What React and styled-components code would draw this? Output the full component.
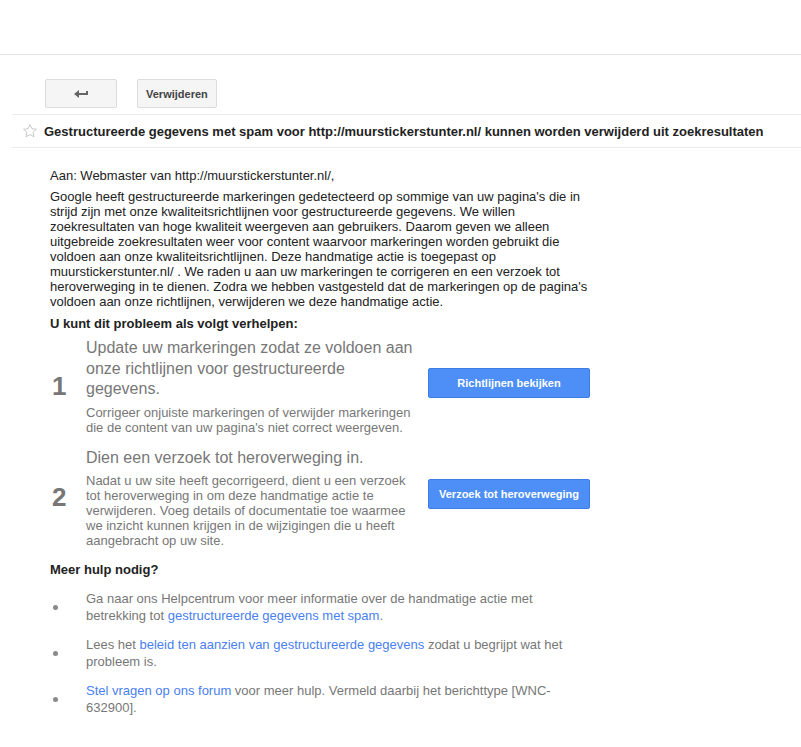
import React from "react";
import styled, { createGlobalStyle } from "styled-components";

const Global = createGlobalStyle`
  html, body { margin: 0; padding: 0; background: #fff; }
  body { font-family: Arial, "Liberation Sans", sans-serif; color: #222; }
`;

const Page = styled.div`
  width: 801px;
  min-height: 747px;
  overflow: hidden;
`;

const TopBar = styled.div`
  height: 54px;
  border-bottom: 1px solid #e5e5e5;
`;

const Toolbar = styled.div`
  display: flex;
  gap: 20px;
  margin-left: 12px;
  padding: 24px 0 6px 33px;
  border-bottom: 1px solid #ebebeb;
`;

const ToolButton = styled.button`
  box-sizing: border-box;
  height: 29px;
  min-width: ${(p) => (p.$wide ? "72px" : "auto")};
  padding: 0 8px;
  display: flex;
  align-items: center;
  justify-content: center;
  background: #f5f5f5;
  border: 1px solid #dcdcdc;
  border-radius: 2px;
  font: bold 11px Arial, "Liberation Sans", sans-serif;
  color: #444;
`;

const TitleRow = styled.div`
  display: flex;
  align-items: center;
  gap: 6px;
  margin-left: 12px;
  height: 32px;
  padding-left: 10px;
  border-bottom: 1px solid #ebebeb;
`;

const Title = styled.h1`
  margin: 0;
  font: bold 13px Arial, "Liberation Sans", sans-serif;
  color: #222;
  white-space: nowrap;
`;

const Content = styled.div`
  width: 540px;
  padding: 20px 0 0 50px;
  font-size: 13px;
  line-height: 15px;
`;

const Para = styled.p`
  margin: 0 0 ${(p) => p.$mb || 6}px;
`;

const Heading = styled.h2`
  margin: ${(p) => p.$mt || 0}px 0 0;
  font: bold 13px Arial, "Liberation Sans", sans-serif;
  line-height: 16px;
  color: #222;
`;

const Step = styled.div`
  display: grid;
  grid-template-columns: 36px 332px 1fr;
  align-items: center;
  margin-top: ${(p) => p.$mt}px;
`;

const StepNum = styled.div`
  font: bold 26px Arial, "Liberation Sans", sans-serif;
  color: #777;
  padding-left: 2px;
`;

const StepBody = styled.div`
  color: #777;
`;

const StepTitle = styled.div`
  font-size: 16px;
  line-height: 20.5px;
  margin-bottom: 5px;
`;

const StepText = styled.div`
  font-size: 13px;
  line-height: 15px;
`;

const BlueButton = styled.button`
  box-sizing: border-box;
  justify-self: end;
  width: 162px;
  height: 30px;
  background: #4d8ff6;
  border: 1px solid #3b7de6;
  border-radius: 2px;
  color: #fff;
  font: bold 11px Arial, "Liberation Sans", sans-serif;
  margin-top: ${(p) => p.$mt || 0}px;
`;

const HelpList = styled.ul`
  list-style: none;
  margin: 12px 0 0;
  padding: 0;
  display: flex;
  flex-direction: column;
  gap: 12px;
`;

const HelpItem = styled.li`
  display: grid;
  grid-template-columns: 36px 1fr;
  align-items: center;
  color: #777;
  line-height: 17px;
`;

const Bullet = styled.span`
  width: 5px;
  height: 5px;
  border-radius: 50%;
  background: #8a8a8a;
  margin-left: 3px;
`;

const Link = styled.a`
  color: #4a7ff0;
  text-decoration: none;
`;

const BackIcon = () => (
  <svg width="15" height="9" viewBox="0 0 15 9">
    <path d="M0 5 L5 1 L5 4 L12 4 L12 2 L14 2 L14 6 L5 6 L5 9 Z" fill="#666" />
  </svg>
);

const StarIcon = () => (
  <svg width="16" height="16" viewBox="0 0 24 24">
    <path
      d="M12 2.5 L14.9 8.6 L21.6 9.4 L16.6 14 L18 20.7 L12 17.3 L6 20.7 L7.4 14 L2.4 9.4 L9.1 8.6 Z"
      fill="none"
      stroke="#c4c4c4"
      strokeWidth="1.4"
      strokeLinejoin="round"
    />
  </svg>
);

export default function App() {
  return (
    <Page>
      <Global />
      <TopBar />
      <Toolbar>
        <ToolButton $wide>
          <BackIcon />
        </ToolButton>
        <ToolButton>Verwijderen</ToolButton>
      </Toolbar>
      <TitleRow>
        <StarIcon />
        <Title>
          Gestructureerde gegevens met spam voor http://muurstickerstunter.nl/ kunnen worden verwijderd uit zoekresultaten
        </Title>
      </TitleRow>
      <Content>
        <Para>Aan: Webmaster van http://muurstickerstunter.nl/,</Para>
        <Para $mb={7}>
          Google heeft gestructureerde markeringen gedetecteerd op sommige van uw pagina's die in strijd zijn met onze
          kwaliteitsrichtlijnen voor gestructureerde gegevens. We willen zoekresultaten van hoge kwaliteit weergeven aan
          gebruikers. Daarom geven we alleen uitgebreide zoekresultaten weer voor content waarvoor markeringen worden
          gebruikt die voldoen aan onze kwaliteitsrichtlijnen. Deze handmatige actie is toegepast op
          muurstickerstunter.nl/ . We raden u aan uw markeringen te corrigeren en een verzoek tot heroverweging in te
          dienen. Zodra we hebben vastgesteld dat de markeringen op de pagina's voldoen aan onze richtlijnen, verwijderen
          we deze handmatige actie.
        </Para>
        <Heading>U kunt dit probleem als volgt verhelpen:</Heading>
        <Step $mt={6}>
          <StepNum>1</StepNum>
          <StepBody>
            <StepTitle>
              Update uw markeringen zodat ze voldoen aan onze richtlijnen voor gestructureerde
              <br />
              gegevens.
            </StepTitle>
            <StepText>
              Corrigeer onjuiste markeringen of verwijder markeringen die de content van uw pagina's niet correct
              weergeven.
            </StepText>
          </StepBody>
          <BlueButton $mt={-7}>Richtlijnen bekijken</BlueButton>
        </Step>
        <Step $mt={13}>
          <StepNum>2</StepNum>
          <StepBody>
            <StepTitle>Dien een verzoek tot heroverweging in.</StepTitle>
            <StepText>
              Nadat u uw site heeft gecorrigeerd, dient u een verzoek tot heroverweging in om deze handmatige actie te
              verwijderen. Voeg details of documentatie toe waarmee we inzicht kunnen krijgen in de wijzigingen die u
              heeft aangebracht op uw site.
            </StepText>
          </StepBody>
          <BlueButton $mt={-8}>Verzoek tot heroverweging</BlueButton>
        </Step>
        <Heading $mt={14}>Meer hulp nodig?</Heading>
        <HelpList>
          <HelpItem>
            <Bullet />
            <span>
              Ga naar ons Helpcentrum voor meer informatie over de handmatige actie met betrekking tot{" "}
              <Link href="#">gestructureerde gegevens met spam</Link>.
            </span>
          </HelpItem>
          <HelpItem>
            <Bullet />
            <span>
              Lees het <Link href="#">beleid ten aanzien van gestructureerde gegevens</Link> zodat u begrijpt wat het
              probleem is.
            </span>
          </HelpItem>
          <HelpItem>
            <Bullet />
            <span>
              <Link href="#">Stel vragen op ons forum</Link> voor meer hulp. Vermeld daarbij het berichttype
              [WNC-632900].
            </span>
          </HelpItem>
        </HelpList>
      </Content>
    </Page>
  );
}
